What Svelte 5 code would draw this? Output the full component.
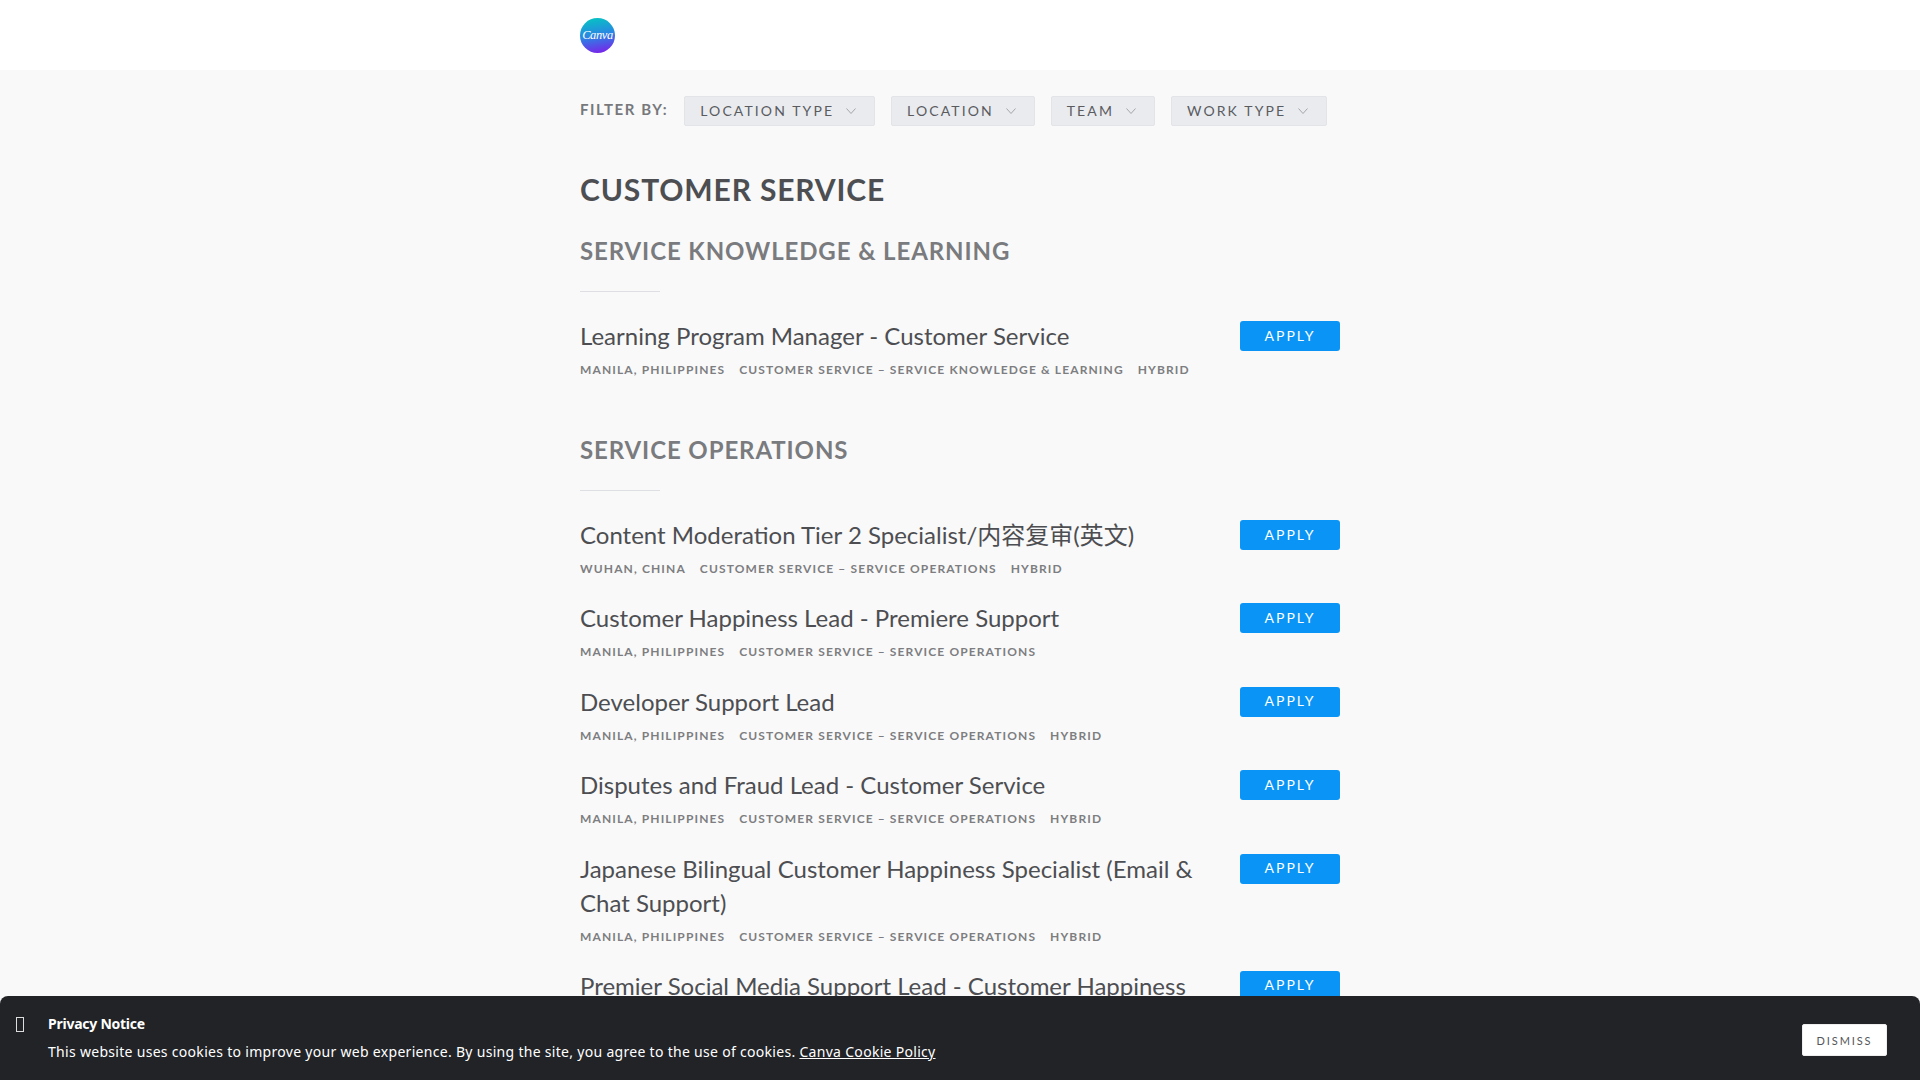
<script>
  const filters = ['Location type', 'Location', 'Team', 'Work type'];

  const groups = [
    {
      name: 'Service Knowledge & Learning',
      jobs: [
        { title: 'Learning Program Manager - Customer Service', place: 'Manila, Philippines', team: 'Customer Service – Service Knowledge & Learning', type: 'Hybrid' }
      ]
    },
    {
      name: 'Service Operations',
      jobs: [
        { title: 'Content Moderation Tier 2 Specialist/内容复审(英文)', place: 'Wuhan, China', team: 'Customer Service – Service Operations', type: 'Hybrid' },
        { title: 'Customer Happiness Lead - Premiere Support', place: 'Manila, Philippines', team: 'Customer Service – Service Operations', type: '' },
        { title: 'Developer Support Lead', place: 'Manila, Philippines', team: 'Customer Service – Service Operations', type: 'Hybrid' },
        { title: 'Disputes and Fraud Lead - Customer Service', place: 'Manila, Philippines', team: 'Customer Service – Service Operations', type: 'Hybrid' },
        { title: 'Japanese Bilingual Customer Happiness Specialist (Email & Chat Support)', place: 'Manila, Philippines', team: 'Customer Service – Service Operations', type: 'Hybrid' },
        { title: 'Premier Social Media Support Lead - Customer Happiness', place: 'Manila, Philippines', team: 'Customer Service – Service Operations', type: 'Hybrid' }
      ]
    }
  ];

  let showNotice = $state(true);
</script>

<header class="top">
  <div class="wrap">
    <a class="logo" href="#top"><span>Canva</span></a>
  </div>
</header>

<main class="wrap">
  <div class="filters">
    <span class="filter-label">Filter by:</span>
    {#each filters as f}
      <button class="filter">
        {f}
        <svg width="10" height="6" viewBox="0 0 10 6"><path d="M.5 .5L5 5.5 9.5 .5" fill="none" stroke="#a3a5ab" stroke-width="1"/></svg>
      </button>
    {/each}
  </div>

  <h1>Customer Service</h1>

  {#each groups as g}
    <section>
      <h2>{g.name}</h2>
      <hr />
      {#each g.jobs as job}
        <div class="job">
          <div class="info">
            <h3>{job.title}</h3>
            <div class="meta">
              <span>{job.place}</span>
              <span>{job.team}</span>
              {#if job.type}<span>{job.type}</span>{/if}
            </div>
          </div>
          <button class="apply">Apply</button>
        </div>
      {/each}
    </section>
  {/each}
</main>

{#if showNotice}
  <div class="notice">
    <span class="tofu"></span>
    <div class="notice-text">
      <strong>Privacy Notice</strong>
      <p>This website uses cookies to improve your web experience. By using the site, you agree to the use of cookies. <a href="#top">Canva Cookie Policy</a></p>
    </div>
    <button class="dismiss" onclick={() => showNotice = false}>Dismiss</button>
  </div>
{/if}

<style>
  *, *::before, *::after { box-sizing: border-box; margin: 0; padding: 0; }

  :global(body) {
    font-family: Lato, 'Noto Sans CJK SC', sans-serif;
    background: #f9f9f9;
    color: #4d4e52;
    overflow: hidden;
  }

  .wrap {
    width: 760px;
    margin: 0 auto;
  }

  .top {
    height: 70px;
    background: #fff;
  }

  .top .wrap {
    height: 100%;
    display: flex;
    align-items: center;
  }

  .logo {
    width: 35px;
    height: 35px;
    border-radius: 50%;
    background: linear-gradient(170deg, #06c3c3 5%, #2a84e4 50%, #7a22ea 95%);
    display: flex;
    align-items: center;
    justify-content: center;
    text-decoration: none;
  }

  .logo span {
    font-family: 'Liberation Serif', serif;
    font-style: italic;
    font-size: 12.5px;
    letter-spacing: -.4px;
    color: #fff;
  }

  .filters {
    display: flex;
    align-items: center;
    gap: 16px;
    padding-top: 26px;
  }

  .filter-label {
    font-size: 15px;
    font-weight: 700;
    letter-spacing: 1.55px;
    text-transform: uppercase;
    color: #77787b;
    position: relative;
    top: -2px;
  }

  .filter {
    height: 30px;
    padding: 0 18px 2px 15px;
    display: flex;
    align-items: center;
    gap: 12px;
    background: #e9ebef;
    border: 1px solid #e2e4e8;
    border-radius: 2px;
    font-family: inherit;
    font-size: 14px;
    letter-spacing: 2.1px;
    text-transform: uppercase;
    color: #5a5b5f;
  }

  .filter svg { margin-top: 2px; }

  h1 {
    margin-top: 45px;
    font-size: 30px;
    line-height: 36px;
    font-weight: 700;
    letter-spacing: .85px;
    text-transform: uppercase;
    color: #4d4e52;
  }

  h2 {
    font-size: 24px;
    line-height: 30px;
    font-weight: 700;
    letter-spacing: .9px;
    text-transform: uppercase;
    color: #7a7b7e;
  }

  section { margin-top: 29px; }
  section + section { margin-top: 55px; }

  hr {
    width: 80px;
    height: 1px;
    margin-top: 25px;
    border: none;
    background: #dedfe2;
  }

  .job {
    display: flex;
    justify-content: space-between;
    align-items: flex-start;
    margin-top: 27px;
  }

  section .job + .job { margin-top: 22.4px; }

  .info { width: 620px; }

  h3 {
    font-size: 24px;
    line-height: 34px;
    font-weight: 400;
    color: #4d4e52;
  }

  .meta {
    display: flex;
    gap: 14px;
    margin-top: 7px;
    font-size: 12px;
    line-height: 20px;
    font-weight: 700;
    letter-spacing: 1.12px;
    text-transform: uppercase;
    color: #7d7e81;
  }

  .apply {
    width: 100px;
    height: 30px;
    margin-top: 2px;
    padding-bottom: 2px;
    background: #0a94f5;
    border: none;
    border-radius: 3px;
    font-family: inherit;
    font-size: 14px;
    letter-spacing: 2px;
    text-transform: uppercase;
    color: #fff;
  }

  .notice {
    position: fixed;
    left: 0;
    right: 0;
    bottom: 0;
    height: 84px;
    padding: 0 33px 0 16px;
    display: flex;
    align-items: flex-start;
    background: #212327;
    border-radius: 8px 8px 0 0;
    color: #fff;
    font-family: 'Noto Sans', sans-serif;
  }

  .tofu {
    width: 8px;
    height: 15px;
    margin-top: 21px;
    margin-right: 24px;
    border: 1px solid #ddd;
  }

  .notice-text {
    flex: 1;
    padding-top: 17px;
  }

  .notice-text strong {
    display: block;
    font-size: 14px;
    line-height: 22px;
    font-weight: 700;
    letter-spacing: -.25px;
  }

  .notice-text p {
    margin-top: 6px;
    font-size: 14px;
    line-height: 22px;
    letter-spacing: .3px;
  }

  .notice-text a { color: #fff; }

  .dismiss {
    width: 85px;
    height: 32px;
    margin-top: 28px;
    background: #fff;
    border: 1px solid #eee;
    border-radius: 2px;
    font-family: Lato, sans-serif;
    font-size: 11px;
    letter-spacing: 1.9px;
    text-transform: uppercase;
    color: #55565a;
  }
</style>
